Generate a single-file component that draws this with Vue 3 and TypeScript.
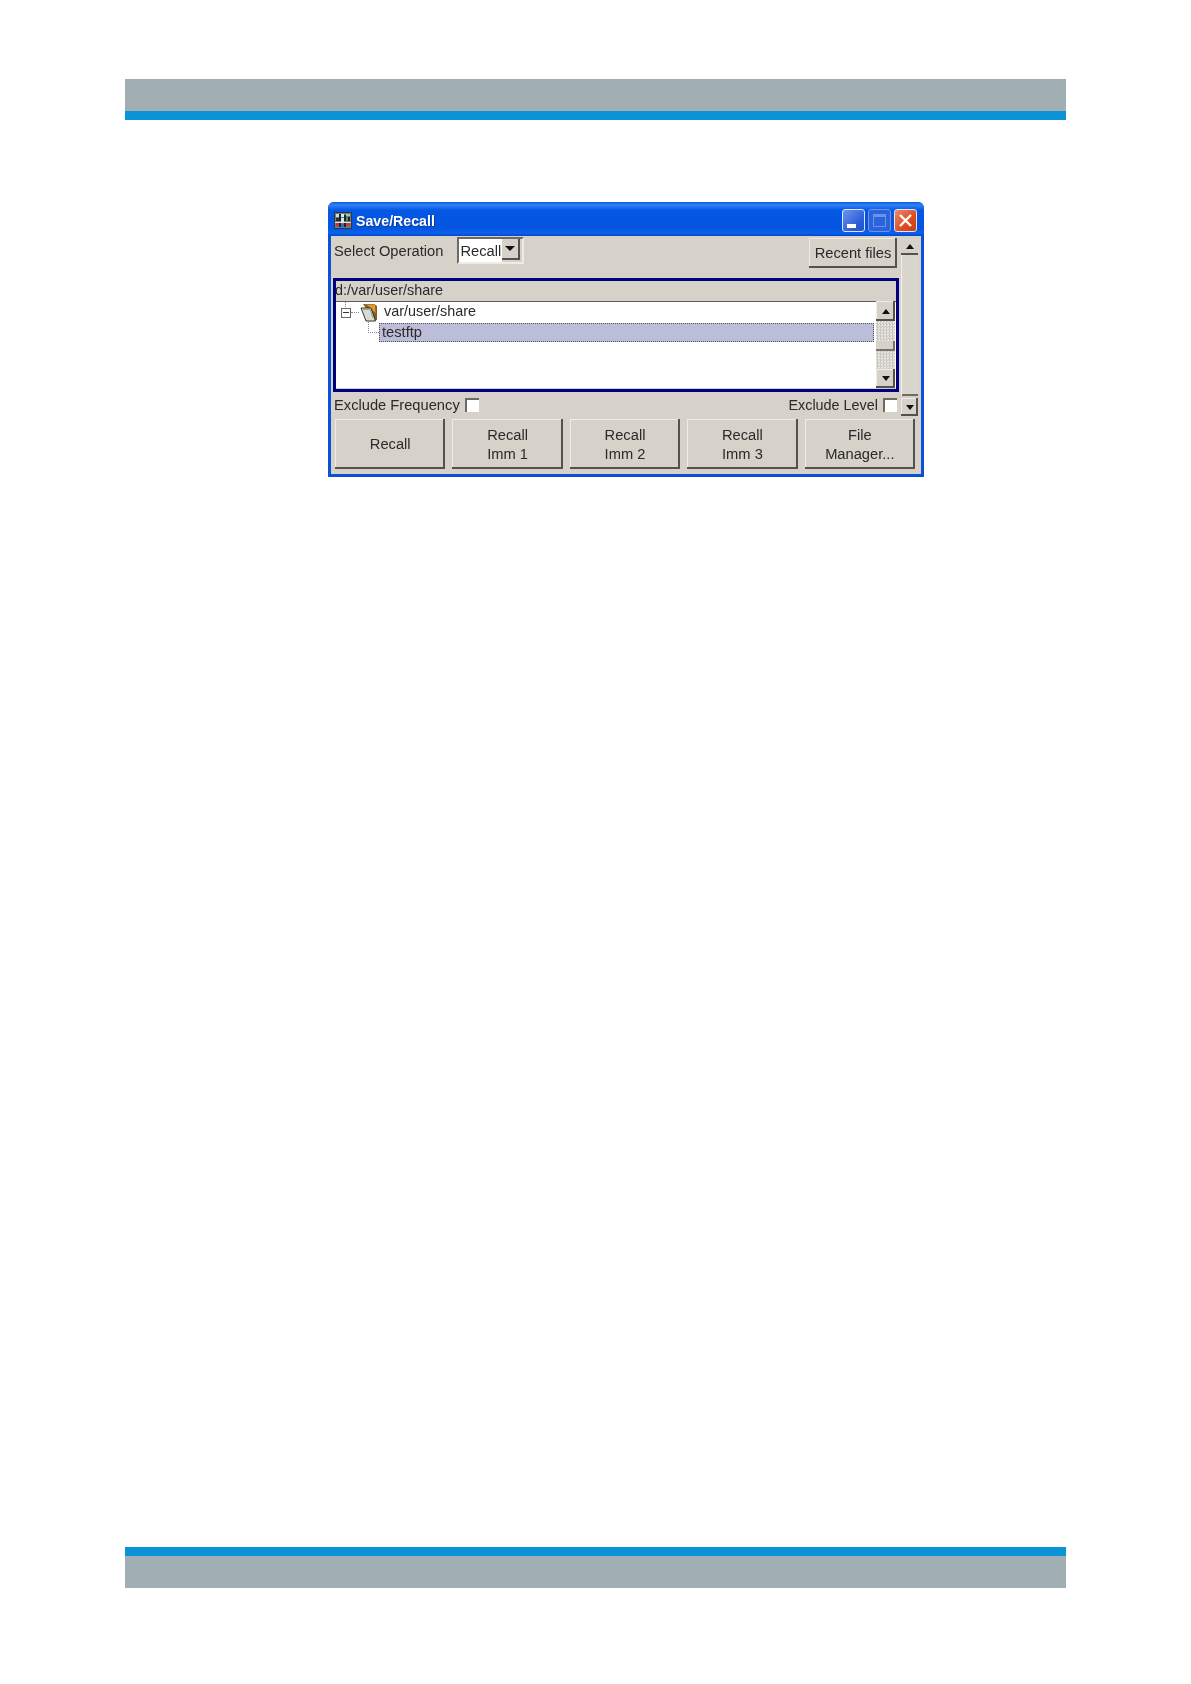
<script setup lang="ts">
interface ActionButton {
  id: string
  lines: string[]
}

const actions: ActionButton[] = [
  { id: 'recall', lines: ['Recall'] },
  { id: 'imm1', lines: ['Recall', 'Imm 1'] },
  { id: 'imm2', lines: ['Recall', 'Imm 2'] },
  { id: 'imm3', lines: ['Recall', 'Imm 3'] },
  { id: 'fm', lines: ['File', 'Manager...'] }
]
</script>

<template>
  <div class="page">
    <header class="band band-top"></header>

    <section class="window">
      <div class="title">
        <svg class="app-icon" width="18" height="17" viewBox="0 0 18 17" shape-rendering="crispEdges">
          <rect width="18" height="17" fill="#2a3a4c" />
          <rect x="1" y="1" width="16" height="15" fill="#6f7a80" />
          <rect x="2" y="2" width="3" height="3" fill="#d8dcd8" />
          <rect x="5" y="2" width="2" height="7" fill="#14202a" />
          <rect x="7" y="2" width="3" height="3" fill="#e8ece8" />
          <rect x="10" y="3" width="2" height="6" fill="#1a2630" />
          <rect x="12" y="2" width="4" height="2" fill="#b8c0b8" />
          <rect x="12" y="5" width="2" height="3" fill="#2ea84a" />
          <rect x="14" y="5" width="2" height="4" fill="#1c2a24" />
          <rect x="2" y="6" width="3" height="3" fill="#263038" />
          <rect x="7" y="6" width="3" height="4" fill="#dfe4df" />
          <rect x="1" y="10" width="16" height="1" fill="#e2e6e2" />
          <rect x="2" y="11" width="3" height="3" fill="#c8342c" />
          <rect x="5" y="11" width="2" height="4" fill="#1b2630" />
          <rect x="7" y="12" width="3" height="3" fill="#3a68c8" />
          <rect x="10" y="11" width="2" height="4" fill="#1b2630" />
          <rect x="12" y="11" width="4" height="3" fill="#d83a30" />
        </svg>
        <span class="title-text">Save/Recall</span>
        <div class="title-buttons">
          <span class="tb tb-min"><i class="min-glyph"></i></span>
          <span class="tb tb-max"><i class="max-glyph"></i></span>
          <span class="tb tb-close">
            <svg width="15" height="15" viewBox="0 0 15 15">
              <path d="M2 2 L13 13 M13 2 L2 13" stroke="#fff" stroke-width="2.4" fill="none" />
            </svg>
          </span>
        </div>
      </div>

      <div class="body">
        <div class="upper">
          <div class="main">
            <div class="row-op">
              <span class="label">Select Operation</span>
              <div class="combo">
                <span class="combo-value">Recall</span>
                <span class="combo-arrow"><i class="tri tri-down tri-wide"></i></span>
              </div>
              <button class="bevel recent" type="button">Recent files</button>
            </div>

            <div class="panel">
              <div class="path">d:/var/user/share</div>
              <div class="tree">
                <div class="tree-content">
                  <div class="node-root">
                    <span class="stub"></span>
                    <span class="expander"></span>
                    <span class="dash"></span>
                    <svg class="folder" width="19" height="19" viewBox="0 0 19 19">
                      <path d="M3 1 L14 1 L17 3 L17 17 L14 17 Z" fill="#8a5a1e" />
                      <path d="M4 1.5 L15 1.5 L15.5 10 L8 2.5 Z" fill="#e09a30" />
                      <path d="M1 5 L11 5 L15.5 18 L6 18 Z" fill="#d8dcd0" stroke="#333" stroke-width="1" />
                      <path d="M3 6.5 L10 6.5 L13 15" fill="none" stroke="#8fa8a0" stroke-width="1" />
                    </svg>
                    <span class="node-text">var/user/share</span>
                  </div>
                  <div class="node-child">
                    <span class="elbow"></span>
                    <span class="selected">testftp</span>
                  </div>
                </div>
                <div class="tree-scroll">
                  <span class="bevel sb-btn"><i class="tri tri-up"></i></span>
                  <span class="sb-track sb-track-upper"></span>
                  <span class="sb-thumb"></span>
                  <span class="sb-track"></span>
                  <span class="bevel sb-btn sb-btn-low"><i class="tri tri-down"></i></span>
                </div>
              </div>
            </div>

            <div class="row-exclude">
              <span class="label">Exclude Frequency</span>
              <span class="check"></span>
              <span class="label push">Exclude Level</span>
              <span class="check"></span>
            </div>
          </div>

          <div class="outer-scroll">
            <span class="outer-btn"><i class="tri tri-up"></i></span>
            <span class="outer-track"></span>
            <span class="outer-btn outer-btn-low"><i class="tri tri-down"></i></span>
          </div>
        </div>

        <div class="actions">
          <button v-for="a in actions" :key="a.id" class="bevel action" type="button">
            <span v-for="line in a.lines" :key="line" class="action-line">{{ line }}</span>
          </button>
        </div>
      </div>
    </section>

    <footer class="band band-bottom"></footer>
  </div>
</template>

<style>
html, body { margin: 0; background: #fff; }
</style>

<style scoped>
.page {
  box-sizing: border-box;
  width: 1191px;
  height: 1684px;
  padding: 79px 125px 96px 125px;
  display: flex;
  flex-direction: column;
  background: #fff;
  font-family: "Liberation Sans", Arial, sans-serif;
  font-size: 14.7px;
  color: #2a2a2a;
}
.band { height: 32px; background: #a1aeb3; flex: none; }
.band-top { border-bottom: 9px solid #0a94d6; }
.band-bottom { border-top: 9px solid #0a94d6; margin-top: auto; }

.window {
  box-sizing: border-box;
  width: 596px;
  height: 275px;
  margin: 82px 0 0 203px;
  border: 3px solid #0c50d8;
  border-top: none;
  border-radius: 6px 6px 0 0;
  background: #d6d2ca;
  display: flex;
  flex-direction: column;
  filter: blur(0.4px);
}
.title {
  height: 34px;
  flex: none;
  margin: 0 -3px;
  padding: 2px 7px 0 6px;
  box-sizing: border-box;
  border-radius: 6px 6px 0 0;
  background: linear-gradient(#0a5ae0 0, #2f84f4 3px, #0558e4 8px, #0454e0 26px, #0a62ee 31px, #0448c4 34px);
  display: flex;
  align-items: center;
}
.app-icon { flex: none; }
.title-text {
  margin-left: 4px;
  padding-top: 1px;
  color: #fff;
  font-weight: bold;
  font-size: 14.2px;
  text-shadow: 1px 1px 0 #0a3ca0;
}
.title-buttons { margin-left: auto; display: flex; gap: 3px; }
.tb {
  box-sizing: border-box;
  width: 23px;
  height: 23px;
  border: 1px solid #dbe6fa;
  border-radius: 3px;
  display: flex;
  align-items: center;
  justify-content: center;
  position: relative;
}
.tb-min { background: linear-gradient(135deg, #6d95ee, #2a5cd8 70%, #2652c8); }
.tb-max { background: #2c62dc; border-color: #6a94ea; }
.tb-close { background: linear-gradient(135deg, #ec8a68, #dc4c22 60%, #c83c18); }
.min-glyph { position: absolute; left: 4px; bottom: 3px; width: 9px; height: 4px; background: #fff; }
.max-glyph { box-sizing: border-box; width: 13px; height: 13px; border: 1px solid #6a94ea; border-top-width: 3px; }

.body {
  flex: 1;
  min-height: 0;
  padding: 2px 0 0 2px;
  display: flex;
  flex-direction: column;
}
.upper { display: flex; gap: 2px; height: 178px; flex: none; }
.main { width: 566px; display: flex; flex-direction: column; }

.row-op {
  display: flex;
  align-items: flex-start;
  height: 30px;
  padding: 0 2px 0 1px;
  margin-bottom: 10px;
  flex: none;
}
.label { line-height: 27px; white-space: nowrap; }
.combo {
  box-sizing: border-box;
  width: 67px;
  height: 27px;
  margin: -1px 0 0 14px;
  border: 2px solid;
  border-color: #6e6a64 #efece6 #efece6 #6e6a64;
  background: #d6d2ca;
  display: flex;
  align-items: stretch;
}
.combo-value {
  width: 43px;
  height: 23px;
  padding: 2px 0 1px 1px;
  box-sizing: border-box;
  background: #fff;
  line-height: 20px;
}
.combo-arrow {
  box-sizing: border-box;
  width: 18px;
  height: 21px;
  border-right: 2px solid #55524c;
  border-bottom: 2px solid #55524c;
  display: flex;
  align-items: center;
  justify-content: center;
}
.bevel {
  box-sizing: border-box;
  background: #d6d2ca;
  border: none;
  box-shadow: inset -2px -2px 0 #55524c, inset 1px 1px 0 #efece6;
  font: inherit;
  color: inherit;
  padding: 0;
}
.recent { margin-left: auto; width: 88px; height: 30px; text-align: center; }

.tri { display: block; width: 0; height: 0; border-left: 4px solid transparent; border-right: 4px solid transparent; }
.tri-down { border-top: 5px solid #111; }
.tri-up { border-bottom: 5px solid #111; }
.tri-wide { border-left-width: 5px; border-right-width: 5px; }

.panel {
  box-sizing: border-box;
  height: 114px;
  flex: none;
  border: 3px solid #000080;
  display: flex;
  flex-direction: column;
}
.path { height: 20px; line-height: 19px; flex: none; margin-left: -1px; font-size: 14.4px; }
.tree {
  flex: 1;
  min-height: 0;
  display: flex;
  background: #fff;
  border-top: 1px solid #5c5c5c;
  border-bottom: 1px solid #cfcfd8;
  padding-right: 1px;
}
.tree-content { flex: 1; min-width: 0; display: flex; flex-direction: column; }
.node-root { height: 21px; display: flex; align-items: center; padding-left: 5px; position: relative; flex: none; }
.stub { position: absolute; left: 9px; top: 0; height: 5px; border-left: 1px dotted #888; }
.expander {
  box-sizing: border-box;
  width: 10px;
  height: 10px;
  border: 1px solid #666;
  position: relative;
  background: linear-gradient(#333, #333) center / 6px 1px no-repeat;
  flex: none;
}
.dash { width: 8px; border-top: 1px dotted #888; flex: none; }
.folder { margin-left: 1px; flex: none; }
.node-text { margin-left: 5px; line-height: 19px; padding-bottom: 2px; font-size: 14.4px; }
.node-child { height: 19px; display: flex; position: relative; padding: 0 2px 0 43px; flex: none; }
.elbow {
  position: absolute;
  left: 32px;
  top: -1px;
  width: 10px;
  height: 10px;
  border-left: 1px dotted #888;
  border-bottom: 1px dotted #888;
}
.selected {
  box-sizing: border-box;
  flex: 1;
  height: 19px;
  line-height: 17px;
  padding-left: 2px;
  background: #bcbdd8;
  border: 1px dotted #555;
}
.tree-scroll { width: 19px; margin-top: -1px; display: flex; flex-direction: column; flex: none; }
.sb-btn { height: 20px; display: flex; align-items: center; justify-content: center; flex: none; }
.sb-btn-low { height: 19px; }
.sb-thumb {
  height: 10px;
  flex: none;
  background: #d6d2ca;
  box-shadow: inset -2px -2px 0 #77736c;
}
.sb-track {
  flex: 1;
  background-color: #e8e6e1;
  background-image: repeating-conic-gradient(#cbc8c2 0 25%, #e8e6e1 0 50%);
  background-size: 3px 3px;
}
.sb-track-upper { flex: none; height: 20px; }

.row-exclude {
  flex: 1;
  display: flex;
  align-items: center;
  padding: 2px 2px 0 1px;
}
.row-exclude .label { line-height: 22px; }
.check {
  box-sizing: border-box;
  width: 14px;
  height: 14px;
  margin-left: 5px;
  background: #fff;
  border-top: 2px solid #6e6a64;
  border-left: 2px solid #6e6a64;
  flex: none;
}
.push { margin-left: auto; font-size: 14.4px; }

.outer-scroll { width: 17px; display: flex; flex-direction: column; flex: none; }
.outer-btn {
  height: 17px;
  flex: none;
  background: #d6d2ca;
  box-shadow: inset 0 -2px 0 #55524c;
  display: flex;
  align-items: center;
  justify-content: center;
}
.outer-btn-low {
  height: 18px;
  margin-top: 2px;
  box-shadow: inset -2px -2px 0 #55524c, inset 1px 1px 0 #efece6;
}
.outer-track { flex: 1; background: #d9d6ce; box-shadow: inset 1px 0 0 #f0eee8, inset 0 -2px 0 #6e6a64; }

.actions {
  display: flex;
  gap: 7px;
  margin: 3px 6px 0 2px;
}
.action {
  flex: 1;
  height: 50px;
  display: flex;
  flex-direction: column;
  align-items: center;
  justify-content: center;
  line-height: 19px;
  padding-top: 1px;
}
.action-line { display: block; }
</style>
